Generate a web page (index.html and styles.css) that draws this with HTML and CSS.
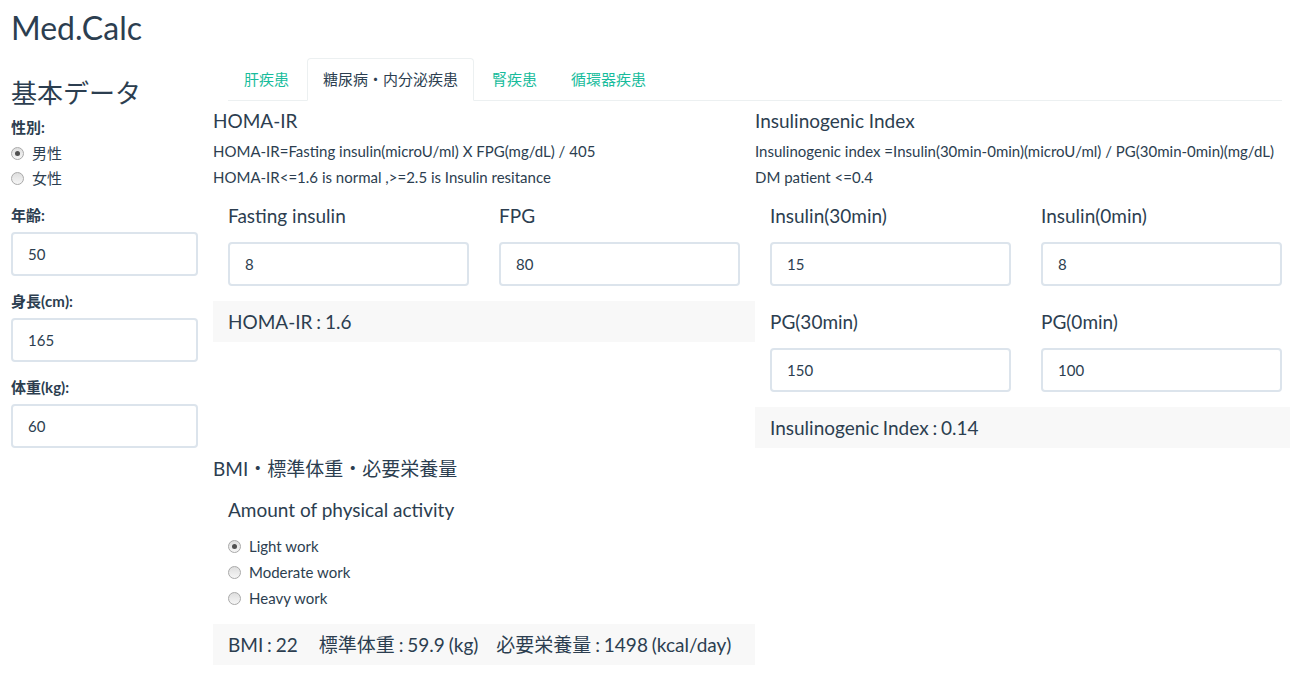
FILE: index.html
```html
<!DOCTYPE html>
<html lang="ja">
<head>
<meta charset="utf-8">
<title>Med.Calc</title>
<link rel="stylesheet" href="styles.css">
</head>
<body>
<div class="page">
  <h2 class="title">Med.Calc</h2>
  <div class="layout">
    <aside class="sidebar">
      <h3 class="side-title">基本データ</h3>
      <div class="side-radios">
        <label class="side-label">性別:</label>
        <div class="radio"><span class="rb checked"></span><span>男性</span></div>
        <div class="radio"><span class="rb"></span><span>女性</span></div>
      </div>
      <div class="side-group first">
        <label class="side-label">年齢:</label>
        <input class="input" type="text" value="50">
      </div>
      <div class="side-group">
        <label class="side-label">身長(cm):</label>
        <input class="input" type="text" value="165">
      </div>
      <div class="side-group">
        <label class="side-label">体重(kg):</label>
        <input class="input" type="text" value="60">
      </div>
    </aside>
    <main class="main">
      <ul class="tabs">
        <li class="tab"><a>肝疾患</a></li>
        <li class="tab active"><a>糖尿病・内分泌疾患</a></li>
        <li class="tab"><a>腎疾患</a></li>
        <li class="tab"><a>循環器疾患</a></li>
      </ul>
      <div class="tab-content">
        <div class="row">
          <section class="calc">
            <h4 class="calc-title">HOMA-IR</h4>
            <div class="desc">
              <p>HOMA-IR=Fasting insulin(microU/ml) X FPG(mg/dL) / 405</p>
              <p>HOMA-IR&lt;=1.6 is normal ,&gt;=2.5 is Insulin resitance</p>
            </div>
            <div class="fields">
              <div class="field"><label class="field-label">Fasting insulin</label><input class="input" type="text" value="8"></div>
              <div class="field"><label class="field-label">FPG</label><input class="input" type="text" value="80"></div>
            </div>
            <div class="well">HOMA-IR : 1.6</div>
          </section>
          <section class="calc">
            <h4 class="calc-title">Insulinogenic Index</h4>
            <div class="desc">
              <p>Insulinogenic index =Insulin(30min-0min)(microU/ml) / PG(30min-0min)(mg/dL)</p>
              <p>DM patient &lt;=0.4</p>
            </div>
            <div class="fields">
              <div class="field"><label class="field-label">Insulin(30min)</label><input class="input" type="text" value="15"></div>
              <div class="field"><label class="field-label">Insulin(0min)</label><input class="input" type="text" value="8"></div>
              <div class="field"><label class="field-label">PG(30min)</label><input class="input" type="text" value="150"></div>
              <div class="field"><label class="field-label">PG(0min)</label><input class="input" type="text" value="100"></div>
            </div>
            <div class="well">Insulinogenic Index : 0.14</div>
          </section>
        </div>
        <div class="row">
          <section class="calc">
            <h4 class="calc-title bmi-title">BMI・標準体重・必要栄養量</h4>
            <div class="activity">
              <label class="field-label">Amount of physical activity</label>
              <div class="radio"><span class="rb checked"></span><span>Light work</span></div>
              <div class="radio"><span class="rb"></span><span>Moderate work</span></div>
              <div class="radio"><span class="rb"></span><span>Heavy work</span></div>
            </div>
            <div class="well bmi-well"><span>BMI : 22</span><span class="seg2">標準体重 : 59.9 (kg)</span><span class="seg3">必要栄養量 : 1498 (kcal/day)</span></div>
          </section>
        </div>
      </div>
    </main>
  </div>
</div>
</body>
</html>
```

FILE: styles.css
```css
html, body {
  margin: 0;
  padding: 0;
  overflow: hidden;
  background: #ffffff;
}

body {
  font-family: "Lato", "Noto Sans CJK JP", sans-serif;
  font-size: 15px;
  color: #2c3e50;
}

.page {
  padding-left: 11px;
}

.title {
  margin: 6px 0 0;
  font-size: 32px;
  font-weight: 400;
  line-height: 44px;
}

.layout {
  display: grid;
  grid-template-columns: 187px 1054px;
  column-gap: 30px;
  align-items: start;
}

/* ---------- sidebar ---------- */
.side-title {
  margin: 27.5px 0 0;
  font-size: 26px;
  font-weight: 400;
  line-height: 30px;
}

.side-label {
  display: block;
  font-weight: 700;
  font-size: 15px;
  line-height: 21px;
}

.side-radios {
  margin-top: 9.5px;
}

.side-radios .radio {
  margin-top: 4px;
  margin-bottom: 0;
}

.side-radios .side-label + .radio {
  margin-top: 5px;
}

.side-group {
  margin-bottom: 15px;
}

.side-group.first {
  margin-top: 16px;
}

.side-group .side-label {
  margin-bottom: 6px;
}

/* ---------- inputs ---------- */
.input {
  display: block;
  box-sizing: border-box;
  width: 100%;
  height: 44px;
  margin: 0;
  padding: 0 15px;
  border: 2px solid #dce4ec;
  border-radius: 4px;
  background: #fff;
  font-family: "Lato", sans-serif;
  font-size: 15px;
  color: #2c3e50;
  outline: none;
}

/* ---------- radios ---------- */
.radio {
  display: flex;
  align-items: center;
  gap: 8px;
  font-size: 15px;
  line-height: 21px;
}

.rb {
  flex: none;
  box-sizing: border-box;
  width: 13px;
  height: 13px;
  border-radius: 50%;
  border: 1px solid #a9a9a9;
  background: linear-gradient(180deg, #dedede 0%, #f6f6f6 100%);
  position: relative;
}

.rb.checked::after {
  content: "";
  position: absolute;
  left: 3px;
  top: 3px;
  width: 5px;
  height: 5px;
  border-radius: 50%;
  background: #505050;
}

/* ---------- tabs ---------- */
.tabs {
  display: flex;
  margin: 8px 0 0;
  padding: 0;
  list-style: none;
  border-bottom: 1px solid #ecf0f1;
}

.tab {
  margin: 0 2px -1px 0;
}

.tab a {
  display: block;
  padding: 10px 15px;
  line-height: 21px;
  font-size: 15px;
  color: #18bc9c;
  border: 1px solid transparent;
  border-radius: 4px 4px 0 0;
}

.tab.active a {
  color: #2c3e50;
  background: #fff;
  border-color: #ecf0f1;
  border-bottom-color: transparent;
}

/* ---------- tab content ---------- */
.tab-content {
  margin: 0 -15px;
}

.row {
  display: grid;
  grid-template-columns: 542px 542px;
  align-items: start;
}

.calc-title {
  margin: 9px 0 0;
  font-size: 19px;
  font-weight: 400;
  line-height: 21px;
}

.bmi-title {
  margin-top: 10px;
}

.desc {
  margin-top: 6.5px;
}

.desc p {
  margin: 0;
  font-size: 15px;
  line-height: 26px;
  white-space: nowrap;
}

.fields {
  display: grid;
  grid-template-columns: 271px 271px;
  margin-top: 5.5px;
}

.field {
  padding: 0 15px;
  margin-bottom: 15px;
}

.field-label {
  display: block;
  margin-top: 10px;
  font-size: 19px;
  line-height: 21px;
}

.field .field-label {
  margin-bottom: 16px;
}

.well {
  box-sizing: border-box;
  height: 41px;
  padding: 10px 15px;
  background: #f8f8f8;
  font-size: 19px;
  line-height: 21px;
  word-spacing: -1px;
  white-space: nowrap;
}

.activity {
  padding: 0 15px;
}

.activity .field-label {
  margin-top: 20px;
}

.activity .radio {
  margin-top: 5px;
}

.activity .field-label + .radio {
  margin-top: 15.5px;
}

.bmi-well {
  margin-top: 15px;
}

.seg2 {
  margin-left: 21px;
}

.seg3 {
  margin-left: 18px;
}
```
